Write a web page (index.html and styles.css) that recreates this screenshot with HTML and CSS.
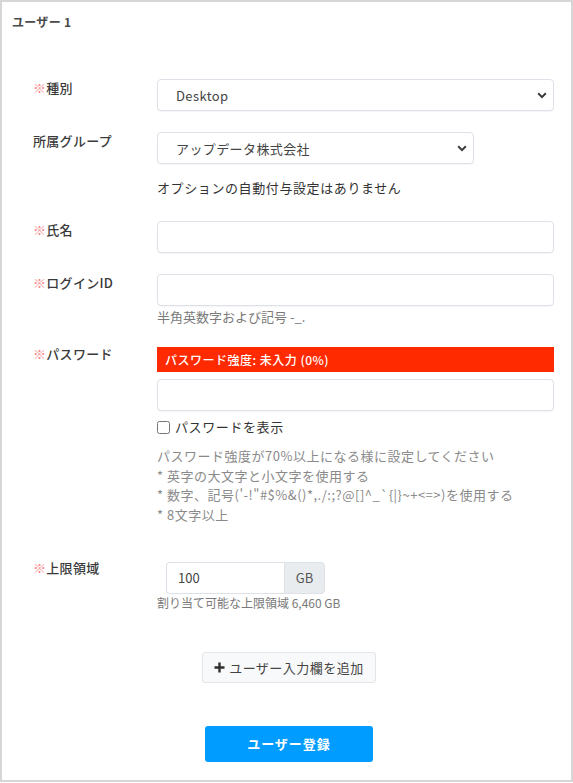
FILE: index.html
```html
<!DOCTYPE html>
<html lang="ja">
<head>
<meta charset="utf-8">
<title>ユーザー登録</title>
<link rel="stylesheet" href="styles.css">
</head>
<body>
<div class="card">
  <div class="title">ユーザー 1</div>
  <div class="form">
    <div class="row row-type">
      <div class="label"><span class="req">※</span>種別</div>
      <div class="ctrl">
        <div class="select">
          <span>Desktop</span>
          <svg class="chev" width="10" height="7" viewBox="0 0 10 7"><path d="M1.2 1.3L5 5.1L8.8 1.3" fill="none" stroke="#3a3a3a" stroke-width="2"/></svg>
        </div>
      </div>
    </div>
    <div class="row row-group">
      <div class="label">所属グループ</div>
      <div class="ctrl">
        <div class="select select-short">
          <span>アップデータ株式会社</span>
          <svg class="chev" width="10" height="7" viewBox="0 0 10 7"><path d="M1.2 1.3L5 5.1L8.8 1.3" fill="none" stroke="#3a3a3a" stroke-width="2"/></svg>
        </div>
        <div class="note">オプションの自動付与設定はありません</div>
      </div>
    </div>
    <div class="row row-name">
      <div class="label"><span class="req">※</span>氏名</div>
      <div class="ctrl"><div class="input"></div></div>
    </div>
    <div class="row row-login">
      <div class="label"><span class="req">※</span>ログインID</div>
      <div class="ctrl">
        <div class="input"></div>
        <div class="help">半角英数字および記号 -_.</div>
      </div>
    </div>
    <div class="row row-pw">
      <div class="label"><span class="req">※</span>パスワード</div>
      <div class="ctrl">
        <div class="strength">パスワード強度: 未入力 (0%)</div>
        <div class="input"></div>
        <label class="check"><input type="checkbox"><span>パスワードを表示</span></label>
        <div class="hints">
          <div>パスワード強度が70%以上になる様に設定してください</div>
          <div>* 英字の大文字と小文字を使用する</div>
          <div>* 数字、記号('-!"#$%&amp;()*,./:;?@[]^_`{|}~+&lt;=&gt;)を使用する</div>
          <div>* 8文字以上</div>
        </div>
      </div>
    </div>
    <div class="row row-storage">
      <div class="label"><span class="req">※</span>上限領域</div>
      <div class="ctrl">
        <div class="igroup">
          <div class="ival">100</div>
          <div class="iaddon">GB</div>
        </div>
        <div class="help help-sm">割り当て可能な上限領域 6,460 GB</div>
      </div>
    </div>
  </div>
  <div class="actions">
    <div class="btn-add">
      <svg width="11" height="11" viewBox="0 0 11 11"><path d="M5.5 0.5V10.5M0.5 5.5H10.5" stroke="#2f2f2f" stroke-width="2.4"/></svg>
      <span>ユーザー入力欄を追加</span>
    </div>
    <div class="btn-submit">ユーザー登録</div>
  </div>
</div>
</body>
</html>
```
FILE: styles.css
```css
html, body {
  margin: 0;
  padding: 0;
  background: #fff;
}
body {
  font-family: "Noto Sans CJK JP", "Noto Sans", sans-serif;
  color: #3a3a3a;
}
.card {
  box-sizing: border-box;
  width: 573px;
  height: 782px;
  border: 2px solid #d6d6d6;
  padding-top: 12px;
}
.title {
  font-size: 12px;
  line-height: 16px;
  font-weight: 700;
  color: #4a4a4a;
  padding-left: 10px;
  letter-spacing: 0.3px;
}
.form {
  margin-top: 49px;
  padding-left: 31px;
  padding-right: 17px;
}
.row {
  display: grid;
  grid-template-columns: 124px 1fr;
}
.label {
  font-size: 13px;
  line-height: 18px;
  color: #3a3a3a;
  font-weight: 500;
  letter-spacing: 0.3px;
}
.req {
  color: #f7888a;
}
.row-group { margin-top: 21px; }
.row-name { margin-top: 24px; }
.row-login { margin-top: 21px; }
.row-pw { margin-top: 22px; }
.row-storage { margin-top: 38px; }
.row-pw .label { margin-top: -2px; }
.row-storage .label { margin-top: -3px; }

.select, .input {
  box-sizing: border-box;
  height: 32px;
  border: 1px solid #dde2e8;
  border-radius: 4px;
  background: #fff;
  box-shadow: 0 1px 1px rgba(0,0,0,0.04);
}
.select {
  display: flex;
  align-items: center;
  justify-content: space-between;
  padding: 0 6px 0 18px;
  font-size: 13px;
  color: #444;
  letter-spacing: 0.4px;
}
.select-short {
  width: 317px;
}
.chev {
  display: block;
}
.note {
  margin-top: 15px;
  font-size: 13px;
  line-height: 18px;
  color: #333;
  letter-spacing: 0.6px;
}
.help {
  margin-top: 3px;
  font-size: 13px;
  line-height: 16px;
  color: #7a7a7a;
}
.help-sm {
  margin-top: 2px;
  font-size: 12px;
  line-height: 14px;
}
.strength {
  box-sizing: border-box;
  height: 25px;
  background: #ff2a00;
  color: #fff;
  font-size: 12px;
  line-height: 25px;
  padding-left: 8px;
  font-weight: 500;
  letter-spacing: 0.5px;
}
.row-pw .input {
  margin-top: 7px;
}
.check {
  margin-top: 7px;
  display: flex;
  align-items: center;
  gap: 5px;
  font-size: 13px;
  line-height: 18px;
  color: #333;
  letter-spacing: 0.6px;
}
.check input {
  margin: 0;
  width: 13px;
  height: 13px;
}
.hints {
  margin-top: 10px;
  font-size: 13px;
  line-height: 19.5px;
  color: #8a8a8a;
  letter-spacing: 0.5px;
}
.igroup {
  display: flex;
  margin-left: 9px;
  width: 159px;
  height: 32px;
}
.ival {
  box-sizing: border-box;
  width: 118px;
  border: 1px solid #dde2e8;
  border-right: none;
  border-radius: 4px 0 0 4px;
  padding-left: 11px;
  font-size: 13px;
  line-height: 30px;
  color: #444;
}
.iaddon {
  box-sizing: border-box;
  flex: 1;
  border: 1px solid #dde2e8;
  border-radius: 0 4px 4px 0;
  background: #e9ecef;
  text-align: center;
  font-size: 13px;
  line-height: 30px;
  color: #555;
}
.actions {
  display: flex;
  flex-direction: column;
  align-items: center;
  padding-left: 5px;
  margin-top: 42px;
}
.btn-add {
  box-sizing: border-box;
  width: 174px;
  height: 31px;
  display: flex;
  align-items: center;
  justify-content: center;
  gap: 4px;
  background: #f8f9fa;
  border: 1px solid #e3e5e8;
  border-radius: 3px;
  font-size: 13px;
  color: #444;
  letter-spacing: 0.5px;
}
.btn-add svg { display: block; }
.btn-submit {
  box-sizing: border-box;
  margin-top: 43px;
  width: 168px;
  height: 36px;
  background: #009cff;
  border-radius: 3px;
  color: #fff;
  font-size: 13px;
  font-weight: 700;
  line-height: 36px;
  text-align: center;
  letter-spacing: 1px;
}
```
